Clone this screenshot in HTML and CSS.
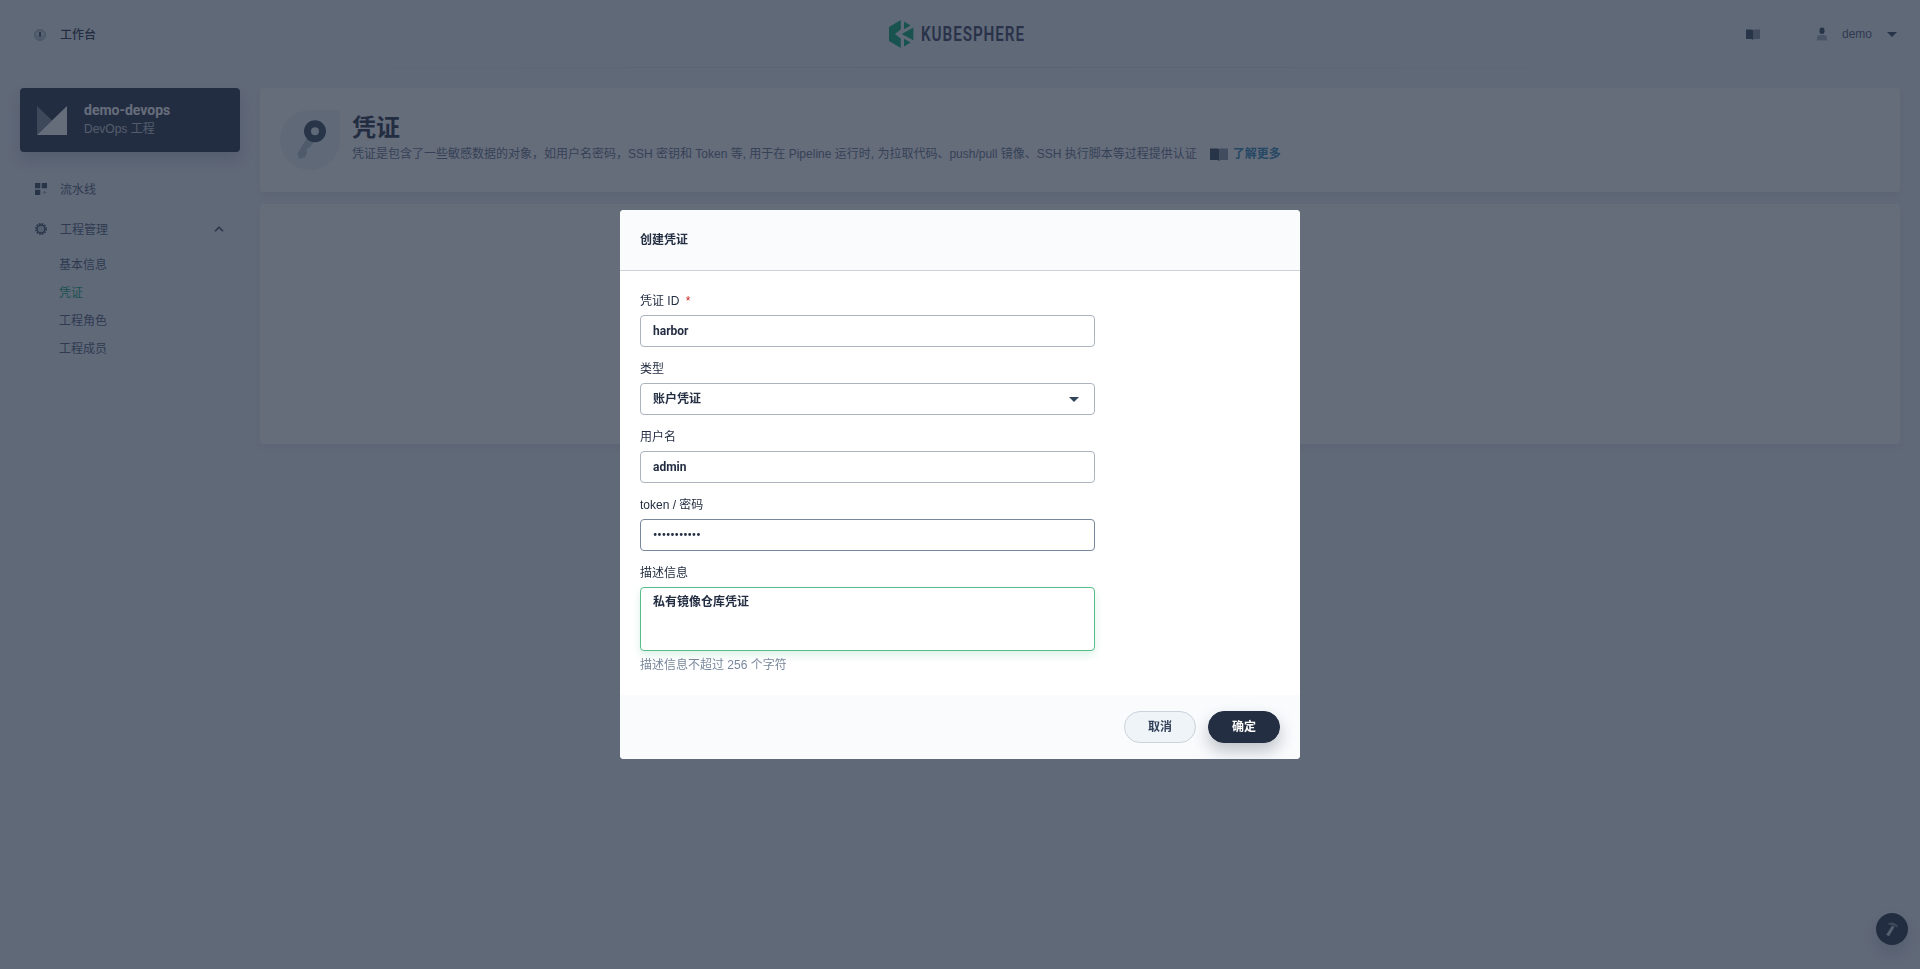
FILE: index.html
```html
<!DOCTYPE html>
<html lang="zh-CN">
<head>
<meta charset="UTF-8">
<meta name="viewport" content="width=device-width, initial-scale=1.0">
<title>KubeSphere</title>
<link rel="stylesheet" href="styles.css">
</head>
<body>

<header class="header">
    <a class="workbench">
        <svg class="icon" width="14" height="14" viewBox="0 0 14 14">
            <circle cx="7" cy="7" r="5.5" fill="#b6c2cd" stroke="#a3b0c0"/>
            <path d="M3 7.5a4 4 0 0 1 8 0z" fill="#d8dfe8"/>
            <path d="M7 4v4.500" stroke="#324558" stroke-width="2"/>
        </svg>
        <span>工作台</span>
    </a>
    <svg class="logo" width="138" height="30" viewBox="0 0 138 30">
        <path d="M12.8 1v9.6L7 15l5.8 4.4V29L1 22V8z" fill="#00aa72"/>
        <path d="M16 2.6l6.7 3.9L16 10.2zM25.4 8.6v12.6L13.6 15zM16 19.8l6.7 3.7-6.7 3.9z" fill="#00aa72"/>
        <text class="logo-text" x="33" y="22.300" textLength="104" lengthAdjust="spacingAndGlyphs">KUBESPHERE</text>
    </svg>
    <div class="header-right">
        <svg class="icon" width="14" height="11" viewBox="0 0 14 11">
            <path d="M0 .5h5.5L7 1v9.8L5.500 10H0z" fill="#324558"/>
            <path d="M14 .5H8.500L7 1v9.800L8.500 10H14z" fill="#8593a4"/>
        </svg>
        <div class="user">
            <svg class="icon" width="10" height="14" viewBox="0 0 10 14">
                <path d="M0 13.500V11q0-3 3-3h4q3 0 3 3v2.500z" fill="#a3b0c0"/>
                <rect x="2.500" y=".5" width="5" height="6.500" rx="2.300" fill="#324558"/>
            </svg>
            <span>demo</span>
            <i class="caret"></i>
        </div>
    </div>
</header>

<div class="layout">
    <aside class="sidebar">
        <div class="project">
            <svg width="30" height="29" viewBox="0 0 30 29">
                <path d="M0 0l15 14.500L0 29z" fill="#7e8896"/>
                <path d="M30 0v29H0z" fill="#fff"/>
            </svg>
            <div class="project-info">
                <strong>demo-devops</strong>
                <p>DevOps 工程</p>
            </div>
        </div>
        <nav class="nav">
            <a class="nav-item">
                <svg class="icon" width="12" height="12" viewBox="0 0 12 12">
                    <path d="M0 0h5.300v5.300H0zM6.700 0H12v5.300H6.700zM0 6.700h5.300V12H0z" fill="#324558"/>
                    <path d="M9.500 7.500v4M7.500 9.500h4" stroke="#a3b0c0"/>
                </svg>
                <span>流水线</span>
            </a>
            <a class="nav-item">
                <svg class="icon" width="12" height="12" viewBox="0 0 12 12">
                    <circle cx="6" cy="6" r="5.300" fill="none" stroke="#324558" stroke-width="1.400" stroke-dasharray="1.665 1.110"/>
                    <circle cx="6" cy="6" r="4" fill="#c3cdd8" stroke="#324558" stroke-width="1.400"/>
                </svg>
                <span>工程管理</span>
                <svg class="chevron" width="10" height="6" viewBox="0 0 10 6">
                    <path d="M1 5.300l4-4 4 4" fill="none" stroke="#324558" stroke-width="1.600"/>
                </svg>
            </a>
            <ul class="sub-nav">
                <li>基本信息</li>
                <li class="active">凭证</li>
                <li>工程角色</li>
                <li>工程成员</li>
            </ul>
        </nav>
    </aside>

    <main class="main">
        <section class="card banner">
            <div class="banner-icon">
                <svg width="60" height="60" viewBox="0 0 60 60">
                    <path d="M27 28L17.500 43.500l1.500 5.500 5.500-1.500 2.500-4-.5-4 3.500-2.500 4-5z" fill="#b6c2cd"/>
                    <circle cx="35" cy="21.200" r="7.500" fill="none" stroke="#324558" stroke-width="7"/>
                </svg>
            </div>
            <div>
                <h1>凭证</h1>
                <p class="desc">
                    <span>凭证是包含了一些敏感数据的对象，如用户名密码，SSH 密钥和 Token 等, 用于在 Pipeline 运行时, 为拉取代码、push/pull 镜像、SSH 执行脚本等过程提供认证</span>
                    <svg class="icon" width="18" height="13" viewBox="0 0 18 13">
                        <path d="M0 .5h7.500L9 1v12l-1.500-1H0z" fill="#324558"/>
                        <path d="M18 .5h-7.500L9 1v12l1.500-1H18z" fill="#8593a4"/>
                    </svg>
                    <a class="more">了解更多</a>
                </p>
            </div>
        </section>
        <section class="card content"></section>
    </main>
</div>

<div class="help-btn">
    <svg width="16" height="16" viewBox="0 0 16 16">
        <path d="M3.500 3.200C6 1 9.500 1 12 3.200l1.500 1v2.600L11 5.200 8 4.300z" fill="#7e8896"/>
        <path d="M8 4.800l2.500 1.300L5 15.200l-2.800-1.400z" fill="#ccd3db"/>
    </svg>
</div>

<div class="mask">
    <div class="modal">
        <div class="modal-header">创建凭证</div>
        <form class="modal-body">
            <div class="field">
                <label>凭证 ID <em>*</em></label>
                <input class="input" type="text" value="harbor">
            </div>
            <div class="field">
                <label>类型</label>
                <div class="input select">
                    <span>账户凭证</span>
                    <i class="caret"></i>
                </div>
            </div>
            <div class="field">
                <label>用户名</label>
                <input class="input" type="text" value="admin">
            </div>
            <div class="field">
                <label>token / 密码</label>
                <input class="input hovered" type="password" value="Harbor12345">
            </div>
            <div class="field">
                <label>描述信息</label>
                <textarea class="input textarea">私有镜像仓库凭证</textarea>
                <p class="tip">描述信息不超过 256 个字符</p>
            </div>
        </form>
        <div class="modal-footer">
            <button class="btn" type="button">取消</button>
            <button class="btn btn-control" type="button">确定</button>
        </div>
    </div>
</div>

</body>
</html>
```

FILE: styles.css
```css
* {
    box-sizing: border-box;
}

html, body {
    height: 100%;
    overflow: hidden;
}

body {
    margin: 0;
    background-color: #eff4f9;
    color: #242e42;
    font-family: "Liberation Sans", "Noto Sans CJK SC", sans-serif;
    font-size: 12px;
    line-height: 20px;
}

p, h1, ul {
    margin: 0;
    padding: 0;
}

.icon {
    flex: none;
}

.caret {
    border: 5px solid transparent;
    border-top-color: #324558;
    border-bottom: 0;
}

/* header */
.header {
    display: grid;
    grid-template-columns: 868px 138px 1fr;
    align-items: center;
    height: 68px;
    padding: 0 20px;
    background: linear-gradient(90deg, transparent 12%, #d8dfe8 50%, transparent 88%) bottom / 100% 1px no-repeat;
}
.workbench {
    display: flex;
    align-items: center;
    gap: 13px;
    padding: 1px 0 0 13px;
    font-weight: 500;
}
.logo {
    display: block;
    overflow: visible;
}
.logo-text {
    fill: #373e5c;
    font-family: Roboto, sans-serif;
    font-size: 20.5px;
    font-weight: 600;
    letter-spacing: 1.2px;
}
.header-right {
    display: flex;
    align-items: center;
    justify-content: flex-end;
    gap: 57px;
    padding-right: 3px;
    color: #4a5974;
}
.user {
    display: flex;
    align-items: center;
}
.user span {
    margin: 0 15px;
}

.layout {
    display: flex;
    gap: 20px;
    padding: 20px 20px 0;
}

/* sidebar */
.sidebar {
    flex: none;
    width: 220px;
}
.project {
    display: flex;
    align-items: center;
    gap: 17px;
    height: 64px;
    padding: 0 17px;
    border-radius: 4px;
    background-color: #242e42;
    box-shadow: 0 8px 16px rgba(36, 46, 66, 0.2);
    color: #fff;
}
.project strong {
    display: block;
    font-family: Roboto, sans-serif;
    font-size: 14px;
    line-height: 18px;
}
.project p {
    color: #c1c9d1;
}
.project-info {
    padding-bottom: 1px;
}
.nav {
    padding-top: 17px;
    color: #4a5974;
}
.nav-item {
    display: flex;
    align-items: center;
    gap: 13px;
    height: 40px;
    padding: 0 16px 0 15px;
}
.nav-item span {
    padding-top: 2px;
}
.chevron {
    margin-left: auto;
}
.sub-nav {
    padding: 2px 0 0 39px;
    list-style: none;
}
.sub-nav li {
    height: 28px;
    line-height: 28px;
}
.sub-nav .active {
    color: #00aa72;
}

/* main area */
.main {
    flex: 1;
}
.card {
    border-radius: 4px;
    background-color: #fff;
    box-shadow: 0 4px 8px rgba(36, 46, 66, 0.06);
}
.banner {
    display: flex;
    gap: 12px;
    height: 104px;
    margin-bottom: 12px;
    padding: 22px 20px;
}
.banner-icon {
    width: 60px;
    height: 60px;
    border-radius: 50% 0 50% 50%;
    background-color: #eff4f9;
}
.banner h1 {
    height: 34px;
    font-size: 24px;
    line-height: 36px;
}
.desc {
    display: flex;
    align-items: center;
    color: #5f708a;
}
.desc .icon {
    margin: 0 5px 0 13px;
}
.more {
    color: #2a85b4;
    font-weight: bold;
}
.content {
    height: 240px;
}

.help-btn {
    position: absolute;
    right: 12px;
    bottom: 24px;
    display: flex;
    align-items: center;
    justify-content: center;
    width: 32px;
    height: 32px;
    border-radius: 50%;
    background-color: #242e42;
    box-shadow: 0 8px 16px rgba(36, 46, 66, 0.2);
}

/* modal */
.mask {
    position: fixed;
    inset: 0;
    display: flex;
    align-items: center;
    justify-content: center;
    background-color: rgba(36, 46, 66, 0.7);
}
.modal {
    width: 680px;
    overflow: hidden;
    border-radius: 4px;
    background-color: #fff;
}
.modal-header {
    height: 61px;
    padding: 20px;
    border-bottom: 1px solid #ccd3db;
    background-color: #f9fbfd;
    font-weight: bold;
}
.modal-body {
    padding: 20px;
}
.field + .field {
    margin-top: 12px;
}
.field label {
    display: block;
    margin-bottom: 4px;
}
.field em {
    margin-left: 3px;
    color: #ca2621;
    font-style: normal;
}
.input {
    display: block;
    width: 455px;
    height: 32px;
    padding: 5px 12px;
    border: 1px solid #abb4be;
    border-radius: 4px;
    outline: none;
    background-color: #fff;
    color: #242e42;
    font: bold 12px/20px Roboto, "Noto Sans CJK SC", sans-serif;
}
.select {
    display: flex;
    align-items: center;
    justify-content: space-between;
    padding-right: 15px;
}
.hovered {
    border-color: #79879c;
}
.textarea {
    height: 64px;
    padding-top: 4px;
    border-color: #55bc8a;
    box-shadow: 0 4px 8px rgba(85, 188, 138, 0.2);
    resize: none;
}
.tip {
    margin-top: 4px;
    color: #79879c;
}
.modal-footer {
    display: flex;
    justify-content: flex-end;
    gap: 12px;
    padding: 16px 20px;
    background-color: #f9fbfd;
}
.btn {
    width: 72px;
    height: 32px;
    padding: 0;
    border: 1px solid #ccd3db;
    border-radius: 16px;
    background-color: #eff4f9;
    color: #36435c;
    font: bold 12px/20px Roboto, "Noto Sans CJK SC", sans-serif;
}
.btn-control {
    border-color: #242e42;
    background-color: #242e42;
    box-shadow: 0 8px 16px rgba(36, 46, 66, 0.28);
    color: #fff;
}
```
